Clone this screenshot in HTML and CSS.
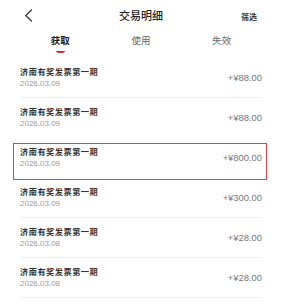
FILE: index.html
```html
<!DOCTYPE html>
<html lang="zh-CN">
<head>
<meta charset="utf-8">
<link rel="stylesheet" href="styles.css">
</head>
<body>
<div class="page">
  <header class="topbar">
    <span class="back"><svg width="9" height="13" viewBox="0 0 9 13"><path d="M7.5 1 L1.8 6.5 L7.5 12" fill="none" stroke="#333" stroke-width="1.2" stroke-linecap="round" stroke-linejoin="round"/></svg></span>
    <span class="title">交易明细</span>
    <span class="filter">筛选</span>
  </header>
  <nav class="tabs">
    <div class="tab active"><span>获取</span><i class="smile"></i></div>
    <div class="tab"><span>使用</span></div>
    <div class="tab"><span>失效</span></div>
  </nav>
  <ul class="list">
    <li class="row"><div class="info"><div class="name">济南有奖发票第一期</div><div class="date">2026.03.09</div></div><div class="amount">+¥88.00</div></li>
    <li class="row plain"><div class="info"><div class="name">济南有奖发票第一期</div><div class="date">2026.03.09</div></div><div class="amount">+¥88.00</div></li>
    <li class="row plain highlight"><div class="info"><div class="name">济南有奖发票第一期</div><div class="date">2026.03.09</div></div><div class="amount">+¥800.00</div></li>
    <li class="row"><div class="info"><div class="name">济南有奖发票第一期</div><div class="date">2026.03.09</div></div><div class="amount">+¥300.00</div></li>
    <li class="row"><div class="info"><div class="name">济南有奖发票第一期</div><div class="date">2026.03.08</div></div><div class="amount">+¥28.00</div></li>
    <li class="row"><div class="info"><div class="name">济南有奖发票第一期</div><div class="date">2026.03.08</div></div><div class="amount">+¥28.00</div></li>
  </ul>
</div>
</body>
</html>
```
FILE: styles.css
```css
* { box-sizing: border-box; margin: 0; padding: 0; }
html, body { background: #fff; }
body {
  font-family: "Liberation Sans", "Noto Sans CJK SC", sans-serif;
  color: #333;
}
.page { padding: 0 34px 0 20px; }
.topbar {
  height: 30px;
  display: grid;
  grid-template-columns: 1fr auto 1fr;
  align-items: center;
}
.back { display: flex; padding-left: 4px; padding-top: 1px; }
.title {
  font-family: "Noto Sans CJK SC", sans-serif;
  font-size: 11px;
  color: #222;
  font-weight: 500;
}
.filter {
  justify-self: end;
  margin-right: 5px;
  font-family: "Noto Sans CJK SC", sans-serif;
  font-size: 8px;
  font-weight: 700;
  color: #333;
  padding-top: 2px;
}
.tabs {
  display: grid;
  grid-template-columns: repeat(3, 1fr);
  height: 28px;
}
.tab {
  display: flex;
  flex-direction: column;
  align-items: center;
  padding-top: 4px;
  font-family: "Noto Sans CJK SC", sans-serif;
  font-size: 9.5px;
  line-height: 12px;
  color: #666;
}
.tab.active { color: #222; font-weight: 700; }
.smile {
  display: block;
  width: 9px;
  height: 4px;
  margin-top: 3px;
  border-bottom: 2px solid #e0242f;
  border-radius: 0 0 50% 50%;
}
.list { list-style: none; }
.row {
  position: relative;
  height: 40px;
  display: flex;
  align-items: center;
  justify-content: space-between;
  border-bottom: 1px solid #efefef;
}
.row.plain { border-bottom-color: transparent; }
.info { display: flex; flex-direction: column; gap: 1px; }
.name {
  font-family: "Noto Sans CJK SC", sans-serif;
  font-size: 8.2px;
  letter-spacing: 0.5px;
  font-weight: 700;
  line-height: 12px;
  color: #333;
}
.date {
  font-size: 8px;
  line-height: 12px;
  color: #999;
}
.amount {
  font-size: 9.4px;
  color: #777;
}
.highlight::after {
  content: "";
  position: absolute;
  left: -7px;
  right: -5px;
  top: 5px;
  height: 35px;
  border: 1.2px solid #d9434a;
}
```
